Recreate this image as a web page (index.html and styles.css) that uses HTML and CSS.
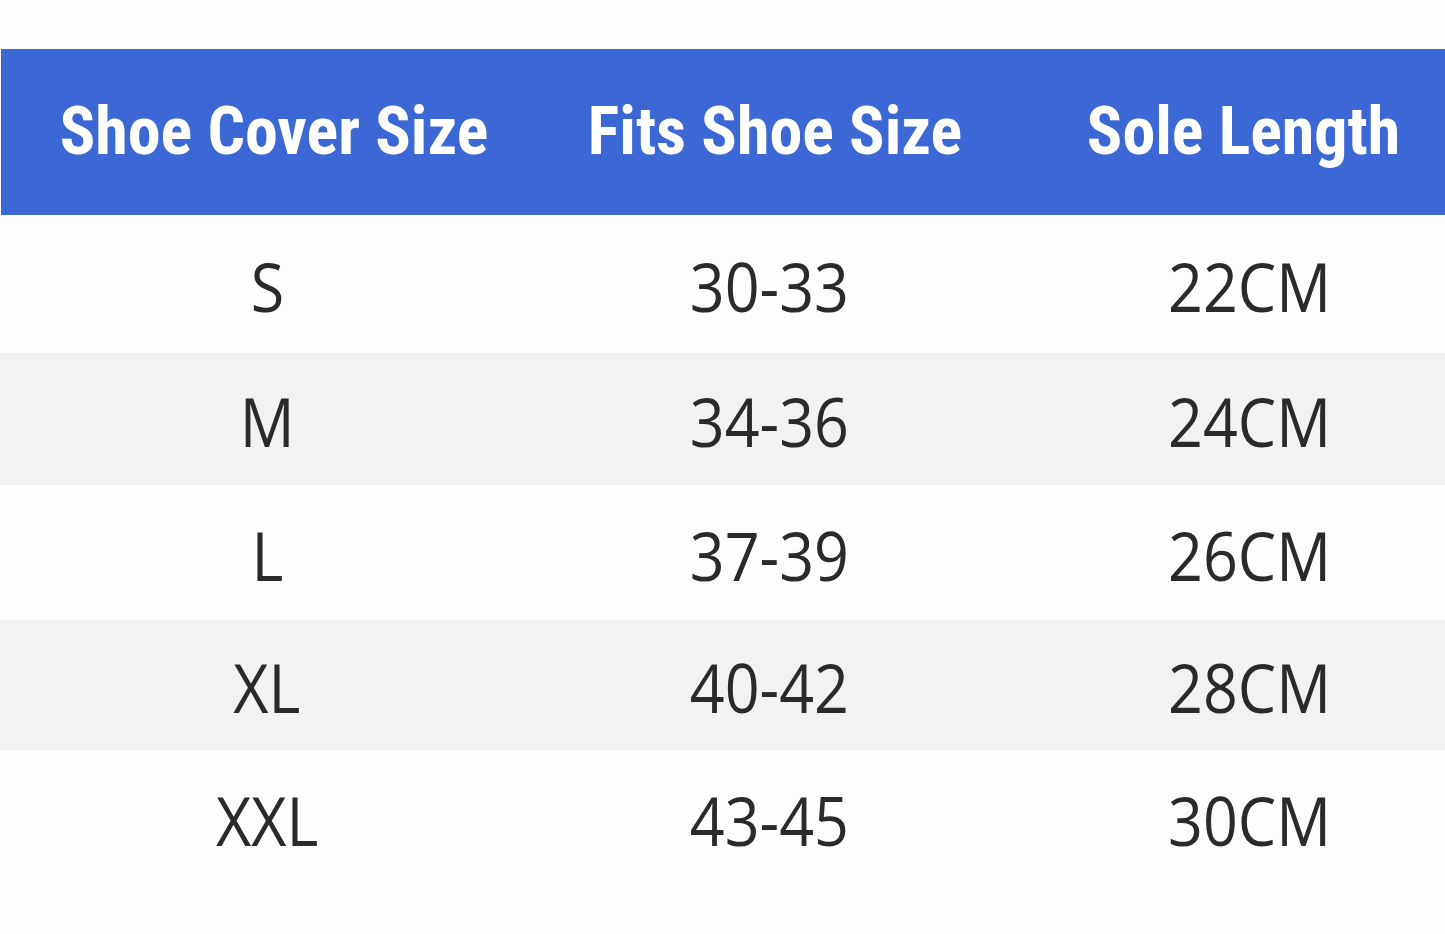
FILE: index.html
```html
<!DOCTYPE html>
<html>
<head>
<meta charset="utf-8">
<link rel="stylesheet" href="styles.css">
</head>
<body>
<div class="page">
  <div class="table">
    <div class="row head">
      <div class="cell c1">Shoe Cover Size</div>
      <div class="cell c2">Fits Shoe Size</div>
      <div class="cell c3">Sole Length</div>
    </div>
    <div class="row r1">
      <div class="cell c1"><span class="v">S</span></div>
      <div class="cell c2"><span class="v">30-33</span></div>
      <div class="cell c3"><span class="v">22CM</span></div>
    </div>
    <div class="row alt r2">
      <div class="cell c1"><span class="v">M</span></div>
      <div class="cell c2"><span class="v">34-36</span></div>
      <div class="cell c3"><span class="v">24CM</span></div>
    </div>
    <div class="row r3">
      <div class="cell c1"><span class="v">L</span></div>
      <div class="cell c2"><span class="v">37-39</span></div>
      <div class="cell c3"><span class="v">26CM</span></div>
    </div>
    <div class="row alt r4">
      <div class="cell c1"><span class="v">XL</span></div>
      <div class="cell c2"><span class="v">40-42</span></div>
      <div class="cell c3"><span class="v">28CM</span></div>
    </div>
    <div class="row r5">
      <div class="cell c1"><span class="v">XXL</span></div>
      <div class="cell c2"><span class="v">43-45</span></div>
      <div class="cell c3"><span class="v">30CM</span></div>
    </div>
  </div>
</div>
</body>
</html>
```
FILE: styles.css
```css
html, body {
  margin: 0;
  padding: 0;
  background: #fdfdfd;
}
.page {
  width: 1445px;
  height: 934px;
  padding-top: 49px;
  box-sizing: border-box;
  overflow: hidden;
}
.table {
  display: flex;
  flex-direction: column;
}
.row {
  display: grid;
  grid-template-columns: 534px 470px 1fr;
  height: 134px;
  box-sizing: border-box;
  padding-top: 5px;
  align-items: center;
  font-family: "Open Sans", "Noto Sans", sans-serif;
  font-size: 67px;
  color: #2a2a2a;
  background: #fdfdfd;
}
.row.alt {
  background: #f2f2f2;
}
.r1 { height: 138px; }
.r2 { height: 132px; }
.r3 { height: 135px; }
.r4 { height: 130px; }
.r5 { height: 135px; }
.row.head {
  height: 166px;
  padding-top: 0;
  margin-left: 1px;
  background: #3b68d4;
  color: #ffffff;
  font-family: "Liberation Sans Narrow", "Roboto Condensed", "Liberation Sans", sans-serif;
  font-weight: bold;
  font-size: 66px;
}
.cell {
  text-align: center;
  line-height: 1;
}
.v {
  display: inline-block;
  transform: scaleX(0.91);
}
.c3 {
  padding-left: 51px;
}
.head .c1 {
  padding-left: 12px;
}
.head .c2 {
  padding-left: 10px;
}
.head .c3 {
  padding-left: 37px;
}
```
